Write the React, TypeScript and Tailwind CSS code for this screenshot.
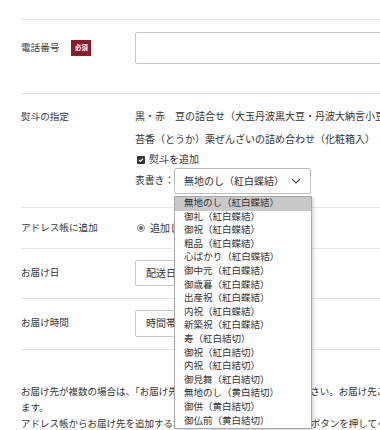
import React from 'react';

const font = { fontFamily: '"Liberation Serif", "Noto Sans CJK JP", serif' };

const noshiOptions = [
  '無地のし（紅白蝶結）',
  '御礼（紅白蝶結）',
  '御祝（紅白蝶結）',
  '粗品（紅白蝶結）',
  '心ばかり（紅白蝶結）',
  '御中元（紅白蝶結）',
  '御歳暮（紅白蝶結）',
  '出産祝（紅白蝶結）',
  '内祝（紅白蝶結）',
  '新築祝（紅白蝶結）',
  '寿（紅白結切）',
  '御祝（紅白結切）',
  '内祝（紅白結切）',
  '御見舞（紅白結切）',
  '無地のし（黄白結切）',
  '御供（黄白結切）',
  '御仏前（黄白結切）',
];

// Row with label on the left and field on the right
const Row = ({ label, children, className }: { label: React.ReactNode; children: React.ReactNode; className: string }) => (
  <div className={`flex border-t border-[#e6e6e6] ${className}`}>
    <div className="w-[114px] shrink-0 whitespace-nowrap text-[9.6px] text-[#3a3a3a]">{label}</div>
    <div className="flex-1">{children}</div>
  </div>
);

const Chevron = () => (
  <svg width="10" height="6" viewBox="0 0 10 6" fill="none" stroke="#444" strokeWidth="1.1">
    <path d="M1 1l4 4 4-4" />
  </svg>
);

const NoshiDropdown = () => (
  <div className="absolute left-0 top-[28px] z-10 w-[138px] border border-[#a8a8a8] bg-white shadow-[2px_2px_3px_rgba(0,0,0,0.15)]">
    {noshiOptions.map((opt, i) => (
      <div
        key={i}
        className={`h-[13.6px] whitespace-nowrap pl-[9px] text-[9.5px] leading-[13.6px] text-[#333] ${i === 0 ? 'bg-[#c9c9c9]' : ''}`}
      >
        {opt}
      </div>
    ))}
  </div>
);

export default function App() {
  return (
    <div className="h-[430px] w-[380px] overflow-hidden bg-white" style={font}>
      <div className="w-[700px] pl-[21px] pt-[19px]">
        <Row
          className="pt-[12px] pb-[29px]"
          label={
            <div className="flex h-[32px] items-center">
              <span>電話番号</span>
              <span className="ml-[12px] flex h-[16px] w-[20px] items-center justify-center bg-[#8a1b2d] text-[6.5px] font-bold text-white">
                必須
              </span>
            </div>
          }
        >
          <div className="h-[32px] w-[400px] rounded-[2px] border border-[#c8c8c8] bg-white" />
        </Row>

        <Row
          className="pt-[11px] pb-[13px]"
          label={<div className="leading-[23px]">熨斗の指定</div>}
        >
          <div className="text-[10px] text-[#333]">
            <div className="whitespace-nowrap leading-[23px]">黒・赤　豆の詰合せ（大玉丹波黒大豆・丹波大納言小豆）</div>
            <div className="whitespace-nowrap leading-[23px]">苔香（とうか）栗ぜんざいの詰め合わせ（化粧箱入）</div>
            <div className="flex h-[17px] items-center pl-[2px]">
              <span className="mr-[4px] flex h-[8px] w-[8px] items-center justify-center rounded-[1px] bg-[#333]">
                <svg width="6" height="6" viewBox="0 0 6 6" fill="none" stroke="white" strokeWidth="1.2">
                  <path d="M1 3l1.4 1.4L5 1.6" />
                </svg>
              </span>
              熨斗を追加
            </div>
            <div className="flex h-[26px] items-center">
              <span className="w-[39px] shrink-0 whitespace-nowrap text-[9.8px]">表書き：</span>
              <div className="relative">
                <div className="flex h-[26px] w-[137px] items-center justify-between rounded-[2px] border border-[#bdbdbd] bg-white pl-[9px] pr-[9px] text-[10px]">
                  <span className="whitespace-nowrap">無地のし（紅白蝶結）</span>
                  <Chevron />
                </div>
                <NoshiDropdown />
              </div>
            </div>
          </div>
        </Row>

        <Row
          className="h-[41px] items-center"
          label={<div>アドレス帳に追加</div>}
        >
          <div className="flex items-center pl-[2px] text-[10px] text-[#333]">
            <span className="mr-[5px] flex h-[8px] w-[8px] items-center justify-center rounded-full border border-[#888]">
              <span className="h-[4px] w-[4px] rounded-full bg-[#666]" />
            </span>
            追加しない
          </div>
        </Row>

        <Row
          className="items-center pt-[11px] pb-[12px]"
          label={<div>お届け日</div>}
        >
          <div className="flex h-[26px] w-[150px] items-center rounded-[2px] border border-[#c8c8c8] pl-[10px] text-[10px] text-[#333]">
            配送日指定なし
          </div>
        </Row>

        <Row
          className="items-center pt-[11px] pb-[12px]"
          label={<div>お届け時間</div>}
        >
          <div className="flex h-[27px] w-[150px] items-center rounded-[2px] border border-[#c8c8c8] pl-[10px] text-[10px] text-[#333]">
            時間帯指定なし
          </div>
        </Row>

        <div className="border-t border-[#e6e6e6] pt-[34px] text-[9.5px] leading-[16px] text-[#333]">
          <div className="whitespace-nowrap">お届け先が複数の場合は、「お届け先を追加」のボタンを押してください。お届け先ごとに商品を指定でき</div>
          <div className="whitespace-nowrap">ます。</div>
          <div className="whitespace-nowrap">アドレス帳からお届け先を追加する場合は、「アドレス帳から選択」ボタンを押してください。</div>
        </div>
      </div>
    </div>
  );
}
